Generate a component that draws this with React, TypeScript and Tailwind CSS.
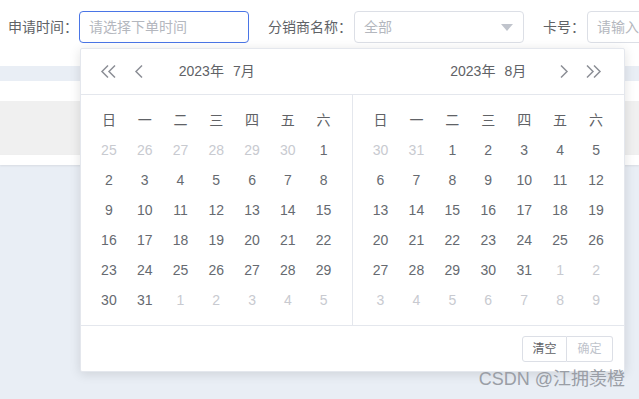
const cjk = { fontFamily: '"Liberation Sans", "Noto Sans CJK SC", sans-serif' };

type Day = { n: number; muted?: boolean };

const julyDays: Day[] = [
    ...[25, 26, 27, 28, 29, 30].map((n) => ({ n, muted: true })),
    ...Array.from({ length: 31 }, (_, i) => ({ n: i + 1 })),
    ...[1, 2, 3, 4, 5].map((n) => ({ n, muted: true })),
];

const augustDays: Day[] = [
    ...[30, 31].map((n) => ({ n, muted: true })),
    ...Array.from({ length: 31 }, (_, i) => ({ n: i + 1 })),
    ...[1, 2, 3, 4, 5, 6, 7, 8, 9].map((n) => ({ n, muted: true })),
];

const weeks = ["日", "一", "二", "三", "四", "五", "六"];

const Chevron = ({ dir, double }: { dir: "left" | "right"; double?: boolean }) => {
    const one = dir === "left" ? "M8 0.5 L2 6.5 L8 12.5" : "M1 0.5 L7 6.5 L1 12.5";
    const two = dir === "left" ? "M15 0.5 L9 6.5 L15 12.5" : "M8 0.5 L14 6.5 L8 12.5";
    return (
        <svg width={double ? 17 : 9} height="13" viewBox={double ? "0 0 17 13" : "0 0 9 13"} fill="none">
            <path d={one} stroke="#8c8f96" strokeWidth="1.5" />
            {double && <path d={two} stroke="#8c8f96" strokeWidth="1.5" />}
        </svg>
    );
};

const Panel = ({ days, border }: { days: Day[]; border?: boolean }) => (
    <div className={`w-[272px] px-[10px] pt-[10px] ${border ? "border-r border-[#e4e7ed]" : ""}`}>
        <div className="grid grid-cols-7">
            {weeks.map((w) => (
                <div key={w} className="h-[30px] flex items-center justify-center text-[14px] text-[#606266]">
                    {w}
                </div>
            ))}
            {days.map((d, i) => (
                <div
                    key={i}
                    className={`h-[30px] flex items-center justify-center text-[14px] ${d.muted ? "text-[#c8cad0]" : "text-[#666a70]"}`}
                >
                    {d.n}
                </div>
            ))}
        </div>
    </div>
);

const DatePopup = () => (
    <div className="absolute left-[80px] top-[48px] w-[545px] bg-white border border-[#e4e7ed] rounded-[2px] shadow-[0_2px_12px_rgba(0,0,0,0.12)]">
        <div className="flex h-[46px] border-b border-[#e4e7ed]">
            <div className="w-[272px] flex items-center pl-[19px] relative">
                <Chevron dir="left" double />
                <span className="ml-[17px]"><Chevron dir="left" /></span>
                <div className="absolute inset-0 flex items-center justify-center gap-[9px] text-[14px] text-[#606266]">
                    <span>2023年</span>
                    <span>7月</span>
                </div>
            </div>
            <div className="w-[272px] flex items-center justify-end pr-[21px] relative">
                <div className="absolute inset-0 flex items-center justify-center gap-[9px] text-[14px] text-[#606266]">
                    <span>2023年</span>
                    <span>8月</span>
                </div>
                <span className="mr-[17px] relative"><Chevron dir="right" /></span>
                <span className="relative"><Chevron dir="right" double /></span>
            </div>
        </div>
        <div className="flex h-[230px]">
            <Panel days={julyDays} border />
            <Panel days={augustDays} />
        </div>
        <div className="h-[46px] border-t border-[#e4e7ed] flex items-center justify-end pr-[11px]">
            <div className="flex">
                <button className="h-[26px] w-[45px] border border-[#dcdfe6] rounded-l-[3px] text-[12px] text-[#606266] bg-white">清空</button>
                <button className="h-[26px] w-[46px] border border-l-0 border-[#dcdfe6] rounded-r-[3px] text-[12px] text-[#c0c4cc] bg-white">确定</button>
            </div>
        </div>
    </div>
);

export default function App() {
    return (
        <div className="relative w-[639px] h-[399px] overflow-hidden bg-[#e9eef5]" style={cjk}>
            <div className="bg-white h-[66px] flex items-start pt-[11px] pl-[8px] whitespace-nowrap">
                <span className="shrink-0 h-[32px] flex items-center text-[14px] text-[#606266] w-[71px]">申请时间：</span>
                <div className="shrink-0 h-[32px] w-[170px] border border-[#4a75e6] rounded-[4px] flex items-center pl-[9px] text-[14px] text-[#b4b7be]">
                    请选择下单时间
                </div>
                <span className="shrink-0 ml-[19px] h-[32px] flex items-center text-[14px] text-[#606266] w-[86px]">分销商名称：</span>
                <div className="shrink-0 h-[32px] w-[170px] border border-[#dcdfe6] rounded-[4px] flex items-center justify-between pl-[9px] pr-[10px] text-[14px] text-[#b4b7be]">
                    <span>全部</span>
                    <svg width="12" height="7" viewBox="0 0 12 7"><path d="M0 0 H12 L6 7 Z" fill="#c0c4cc" /></svg>
                </div>
                <span className="shrink-0 ml-[19px] h-[32px] flex items-center text-[14px] text-[#606266] w-[44px]">卡号：</span>
                <div className="shrink-0 h-[32px] w-[120px] border border-[#dcdfe6] rounded-[4px] flex items-center pl-[9px] text-[14px] text-[#b4b7be]">
                    请输入卡号
                </div>
            </div>
            <div className="h-[15px]" />
            <div className="bg-white h-[20px]" />
            <div className="bg-[#f0f0f0] h-[54px]" />
            <div className="bg-white h-[10px] shadow-[0_1px_2px_rgba(0,0,0,0.08)]" />
            <DatePopup />
            <div className="absolute right-[14px] bottom-[6px] text-[18px] text-[#9a9ea6]">CSDN @江拥羡橙</div>
        </div>
    );
}
